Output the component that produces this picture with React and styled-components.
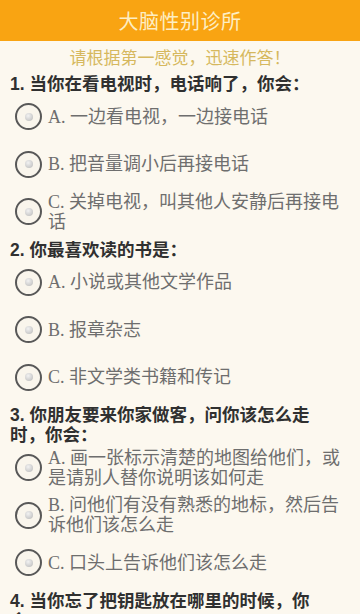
import React from 'react';
import styled, { createGlobalStyle } from 'styled-components';

const GlobalStyle = createGlobalStyle`
    html, body {
        margin: 0;
        padding: 0;
        background-color: #fcf8ef;
    }
    body {
        font-family: "Liberation Serif", "Noto Sans CJK SC", serif;
    }
`;

const Page = styled.div`
    width: 360px;
    min-height: 614px;
    background-color: #fcf8ef;
`;

const Header = styled.div`
    height: 41px;
    background-color: #f9a412;
    display: flex;
    align-items: center;
    justify-content: center;
    .title{
        color: #fdeec4;
        font-family: "Noto Sans CJK SC", sans-serif;
        font-size: 20px;
        letter-spacing: 0.5px;
    }
`;

const Tip = styled.p`
    margin: 0;
    padding-top: 7px;
    text-align: center;
    color: #d6b85e;
    font-size: 17px;
    line-height: 22px;
`;

const Question = styled.div`
    margin-top: 4px;
    &:first-of-type{
        margin-top: 7px;
    }
`;

const QTitle = styled.h3`
    margin: 0;
    padding: 0 34px 0 10px;
    color: #303030;
    font-family: "Liberation Sans", "Noto Sans CJK SC", sans-serif;
    font-weight: 700;
    font-size: 17.5px;
    line-height: 20px;
`;

const Options = styled.ul`
    list-style: none;
    margin: -1px 0 0 0;
    padding: 0 14px 0 15px;
`;

const Option = styled.li`
    min-height: 47.5px;
    display: flex;
    align-items: center;
    gap: 6px;
    .text{
        flex: 1;
        color: #6e6e6e;
        font-size: 18px;
        line-height: 20px;
    }
`;

const Radio = styled.span`
    flex: none;
    width: 23px;
    height: 23px;
    border: 2px solid #585858;
    border-radius: 50%;
    background: #f9f5ec;
    display: flex;
    align-items: center;
    justify-content: center;
    &::after{
        content: '';
        width: 8px;
        height: 8px;
        border-radius: 50%;
        background: radial-gradient(circle at 40% 35%, #f2f2f2 0%, #cfcfcf 60%, #b5b5b5 100%);
    }
`;

const questions = [
    {
        title: '1. 当你在看电视时，电话响了，你会：',
        options: ['A. 一边看电视，一边接电话', 'B. 把音量调小后再接电话', 'C. 关掉电视，叫其他人安静后再接电话'],
    },
    {
        title: '2. 你最喜欢读的书是：',
        options: ['A. 小说或其他文学作品', 'B. 报章杂志', 'C. 非文学类书籍和传记'],
    },
    {
        title: '3. 你朋友要来你家做客，问你该怎么走时，你会：',
        options: ['A. 画一张标示清楚的地图给他们，或是请别人替你说明该如何走', 'B. 问他们有没有熟悉的地标，然后告诉他们该怎么走', 'C. 口头上告诉他们该怎么走'],
    },
    {
        title: '4. 当你忘了把钥匙放在哪里的时候，你会：',
        options: ['A. 做别的事情，等到自然想起来为止', 'B. 做别的事情，但同时试着回想把钥匙放在哪里', 'C. 在心里回想刚刚做了哪些事，借此想起钥匙放在何处'],
    },
];

const App = () => {
    return (
        <Page>
            <GlobalStyle />
            <Header>
                <span className='title'>大脑性别诊所</span>
            </Header>
            <Tip>请根据第一感觉，迅速作答！</Tip>
            {questions.map((q, i) => (
                <Question key={i}>
                    <QTitle>{q.title}</QTitle>
                    <Options>
                        {q.options.map((o, j) => (
                            <Option key={j}>
                                <Radio />
                                <span className='text'>{o}</span>
                            </Option>
                        ))}
                    </Options>
                </Question>
            ))}
        </Page>
    );
};

export default App;
